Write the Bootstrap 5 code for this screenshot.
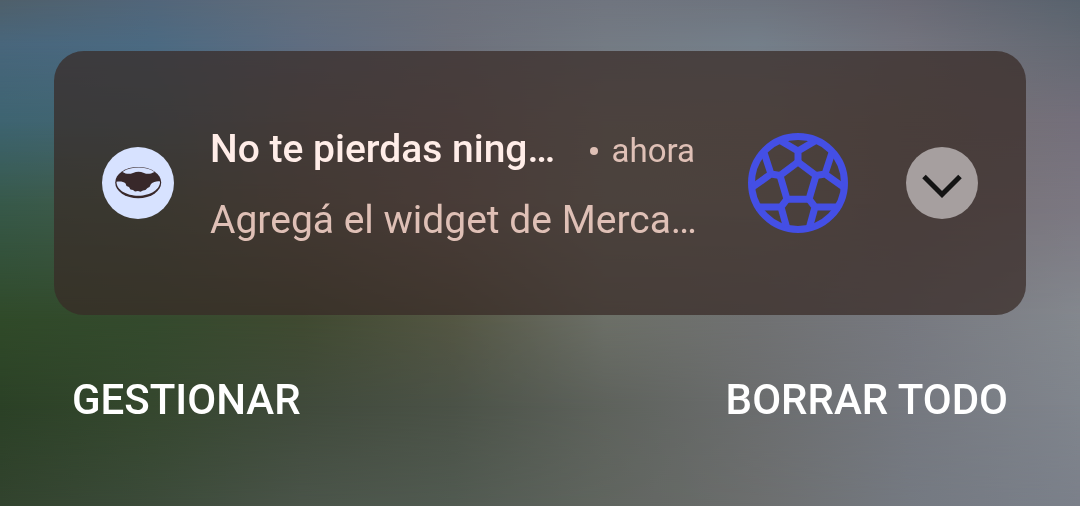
<!DOCTYPE html>
<html lang="es">
<head>
<meta charset="utf-8">
<meta name="viewport" content="width=device-width, initial-scale=1">
<title>Notificaciones</title>
<link href="https://cdn.jsdelivr.net/npm/bootstrap@5.3.0/dist/css/bootstrap.min.css" rel="stylesheet">
<style>
  body { font-family: Roboto, sans-serif; background: #5c605c; }
  /* Wallpaper: horizontal colour bands, each fading in over the one above */
  .wallpaper { z-index: -1; overflow: hidden; }
  .band { position: absolute; inset: 0; }
  .band-1 { background: linear-gradient(90deg, #4f606b, #52667a 14%, #626d7b 28%, #6c707b 42%, #70757f 56%, #6e747e 70%, #6b6b76 84%, #59636e); }
  .band-2 { background: linear-gradient(90deg, #48667c, #4b6a82 14%, #5f6d81 28%, #6d717c 42%, #747b84 56%, #747f8a 70%, #73747e 84%, #646973);
            -webkit-mask-image: linear-gradient(transparent, #000 9%); mask-image: linear-gradient(transparent, #000 9%); }
  .band-3 { background: linear-gradient(90deg, #3e6471, #446672 14%, #63676a 28%, #736c70 42%, #7f807d 56%, #807f7c 70%, #767272 84%, #746f7b);
            -webkit-mask-image: linear-gradient(transparent 9%, #000 24%); mask-image: linear-gradient(transparent 9%, #000 24%); }
  .band-4 { background: linear-gradient(90deg, #37594a, #435c4b 14%, #605f55 28%, #756b66 42%, #7f8179 56%, #7f7f7b 70%, #777274 84%, #7b7781);
            -webkit-mask-image: linear-gradient(transparent 24%, #000 40%); mask-image: linear-gradient(transparent 24%, #000 40%); }
  .band-5 { background: linear-gradient(90deg, #304a29, #344a2d 14%, #404a31 28%, #545643 42%, #6c6f67 56%, #707172 70%, #777980 84%, #84888e);
            -webkit-mask-image: linear-gradient(transparent 40%, #000 63%); mask-image: linear-gradient(transparent 40%, #000 63%); }
  .band-6 { background: linear-gradient(90deg, #2b4126, #35472e 14%, #404a3b 28%, #4b5247 42%, #5e625c 56%, #6b6d6e 70%, #75787f 84%, #80858d);
            -webkit-mask-image: linear-gradient(transparent 63%, #000 80%); mask-image: linear-gradient(transparent 63%, #000 80%); }
  .band-7 { background: linear-gradient(90deg, #32432e, #3c4b3a 14%, #4a5449 28%, #515a51 42%, #60655f 56%, #6c6e6e 70%, #747981 84%, #7b808a);
            -webkit-mask-image: linear-gradient(transparent 80%, #000); mask-image: linear-gradient(transparent 80%, #000); }

  .shade { padding: 51px 5% 0; }
  .notice { background: rgba(56, 42, 39, .73); border-radius: 30px; padding: 68px 48px; }
  .notice-text { margin-left: 36px; margin-right: 50px; padding-top: 4px; }
  .notice-title { font-size: 39px; line-height: 52px; font-weight: 500; color: #ffede8; }
  .notice-time { font-size: 33px; line-height: 52px; color: #dfc0b6; padding: 2px 3px 0 0; }
  .notice-body { font-size: 39px; line-height: 54px; color: #dfc0b6; margin-top: 16px; }
  .dot { width: 8px; height: 8px; background: #dfc0b6; margin-right: 14px; }
  .expand { width: 72px; height: 72px; margin-left: 58px; background: #a69f9f; }
  .shade-action { font-size: 42px; line-height: 56px; font-weight: 500; color: #fff; }
  .actions { padding: 57px 18px 0; }
</style>
</head>
<body>
<div class="wallpaper position-fixed top-0 start-0 w-100 h-100" aria-hidden="true">
  <div class="band band-1"></div><div class="band band-2"></div><div class="band band-3"></div>
  <div class="band band-4"></div><div class="band band-5"></div><div class="band band-6"></div>
  <div class="band band-7"></div>
</div>
<main class="shade">
  <article class="notice d-flex align-items-center">
    <svg class="flex-shrink-0" width="72" height="72" viewBox="0 0 72 72" aria-hidden="true">
      <circle cx="36" cy="36" r="36" fill="#d7e2ff"/>
      <ellipse cx="36.2" cy="35.6" rx="23" ry="15.700" fill="#38282a"/>
      <path d="M20.500 25C25 21.800 31 20.600 36.500 20.600S48 21.800 52.500 25C48 27.400 45 27.200 42 26C38 24.400 35 24.400 31 26C27 27.500 24 27 20.500 25Z" fill="#d7e2ff"/>
      <path d="M14.500 34.800C18 34.200 21.500 34.600 23.600 36.500L24.500 39L27 40L28.500 42.500L31 43L33 44.500L36 44L38.500 44.800L41 43.500L43.500 43L45.500 41L47.500 40L49 37C51.500 34.800 55 34 58 34.500C58.500 42 48.500 48.800 36.500 48.800C24 48.800 14.300 42.500 14.500 34.800Z" fill="#d7e2ff"/>
    </svg>
    <div class="notice-text flex-grow-1">
      <div class="d-flex justify-content-between">
        <h1 class="notice-title text-nowrap m-0">No te pierdas ning…</h1>
        <div class="notice-time d-flex align-items-center text-nowrap"><span class="dot rounded-circle"></span><span>ahora</span></div>
      </div>
      <p class="notice-body text-nowrap mb-0">Agregá el widget de Merca…</p>
    </div>
    <svg class="flex-shrink-0" width="100" height="100" viewBox="0 0 100 100" fill="none" stroke="#444fe5" stroke-width="7" stroke-linejoin="round" aria-hidden="true">
      <circle cx="50" cy="50" r="46.500"/>
      <path d="M50 29L68 42.500L61 66.200H39L32 42.500Z"/>
      <path d="M50 29V18L33 8M50 18L67 8M68 42.500L77 41L84.500 18M77 41L96 54.500M32 42.500L23 41L15.500 18M23 41L4 54.500M61 66.200L67 74H92M67 74L61.500 94M39 66.200L33 74H8M33 74L38.500 94"/>
    </svg>
    <button type="button" class="expand btn p-0 border-0 rounded-circle flex-shrink-0" aria-label="Expandir">
      <svg class="d-block" width="72" height="72" viewBox="0 0 72 72" fill="none" stroke="#141414" stroke-width="5" aria-hidden="true"><path d="M18 29.500L36 47.500L54 29.500"/></svg>
    </button>
  </article>
  <div class="actions d-flex justify-content-between">
    <button type="button" class="shade-action btn p-0 border-0">GESTIONAR</button>
    <button type="button" class="shade-action btn p-0 border-0">BORRAR TODO</button>
  </div>
</main>
<script src="https://cdn.jsdelivr.net/npm/bootstrap@5.3.0/dist/js/bootstrap.bundle.min.js"></script>
</body>
</html>
